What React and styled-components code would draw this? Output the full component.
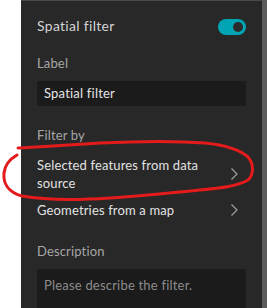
import React from "react";
import styled, { createGlobalStyle } from "styled-components";

const GlobalStyle = createGlobalStyle`
  html, body {
    margin: 0;
    padding: 0;
    background: #ffffff;
    overflow: hidden;
  }
  * { box-sizing: border-box; }
`;

const options = [
  { id: "ds", text: "Selected features from data source" },
  { id: "map", text: "Geometries from a map" },
];

function App() {
  return (
    <>
      <GlobalStyle />
      <Page>
        <Gutter />
        <Panel>
          <TitleRow>
            <Title>Spatial filter</Title>
            <Toggle on>
              <Knob />
            </Toggle>
          </TitleRow>

          <FieldLabel top="20px">Label</FieldLabel>
          <TextInput>Spatial filter</TextInput>

          <FieldLabel top="21px">Filter by</FieldLabel>
          <OptionList>
            {options.map((o) => (
              <Option key={o.id}>
                <OptionText>{o.text}</OptionText>
                <Chevron viewBox="0 0 10 14">
                  <path d="M2.5 1.5 L8 7 L2.5 12.5" />
                </Chevron>
              </Option>
            ))}
          </OptionList>

          <FieldLabel top="24px">Description</FieldLabel>
          <TextArea>Please describe the filter.</TextArea>

          <Annotation viewBox="0 0 267 308">
            <path d="M18 148 C40 147 70 145 100 143 C140 141 180 141 205 143 C225 145 240 150 248 157 C254 164 254 174 248 180 C238 186 222 188 200 190 C170 193 140 196 110 198 C80 200 50 201 22 196 C8 192 3 183 4 173 C5 164 10 159 17 155" />
          </Annotation>
        </Panel>
        <Strip />
      </Page>
    </>
  );
}

const Page = styled.div`
  display: flex;
  height: 308px;
  width: 267px;
  font-family: Lato, "Open Sans", sans-serif;
`;

const Gutter = styled.div`
  width: 21px;
  flex: none;
  background: #ffffff;
`;

const Panel = styled.div`
  width: 241px;
  flex: none;
  background: #282828;
  border-top: 1px solid #4a4a4a;
  padding: 18px 16px 0 16px;
  display: flex;
  flex-direction: column;
`;

const Strip = styled.div`
  flex: 1;
  background: #5c5c5c;
`;

const TitleRow = styled.div`
  display: flex;
  align-items: center;
  justify-content: space-between;
  height: 16px;
`;

const Title = styled.div`
  color: #d4d4d4;
  font-size: 14px;
  letter-spacing: 0.3px;
  line-height: 16px;
  margin-top: -2px;
`;

const Toggle = styled.div`
  width: 28px;
  height: 16px;
  border-radius: 8px;
  background: ${(p) => (p.on ? "#00a5b5" : "#555")};
  display: flex;
  align-items: center;
  justify-content: ${(p) => (p.on ? "flex-end" : "flex-start")};
  padding: 0 3px;
`;

const Knob = styled.div`
  width: 10px;
  height: 10px;
  border-radius: 50%;
  background: #2b2b2b;
`;

const FieldLabel = styled.div`
  margin-top: ${(p) => p.top};
  color: #a6a6a6;
  font-size: 13px;
  letter-spacing: 0.15px;
  line-height: 16px;
`;

const TextInput = styled.div`
  margin-top: 10px;
  height: 25px;
  background: #1b1b1b;
  border-radius: 2px;
  padding: 0 7px;
  color: #e4e4e4;
  font-size: 13px;
  letter-spacing: 0.2px;
  line-height: 25px;
`;

const OptionList = styled.div`
  display: flex;
  flex-direction: column;
  margin-top: 4px;
`;

const Option = styled.div`
  display: flex;
  align-items: center;
  justify-content: space-between;
  padding: 9px 0 0 0;
`;

const OptionText = styled.div`
  color: #e2e2e2;
  font-size: 13px;
  letter-spacing: 0.15px;
  line-height: 18px;
  width: 175px;
`;

const Chevron = styled.svg`
  width: 10px;
  height: 14px;
  margin-right: 7px;
  fill: none;
  stroke: #a0a0a0;
  stroke-width: 1.2;
`;

const TextArea = styled.div`
  margin-top: 10px;
  flex: 1;
  background: #1b1b1b;
  border-radius: 2px 2px 0 0;
  padding: 7px 7px;
  color: #8c8c8c;
  font-size: 13px;
  letter-spacing: 0.2px;
  line-height: 18px;
`;

const Annotation = styled.svg`
  position: absolute;
  left: 0;
  top: 0;
  width: 267px;
  height: 308px;
  pointer-events: none;
  fill: none;
  stroke: #e31b1b;
  stroke-width: 3;
  stroke-linecap: round;
`;

export default App;
